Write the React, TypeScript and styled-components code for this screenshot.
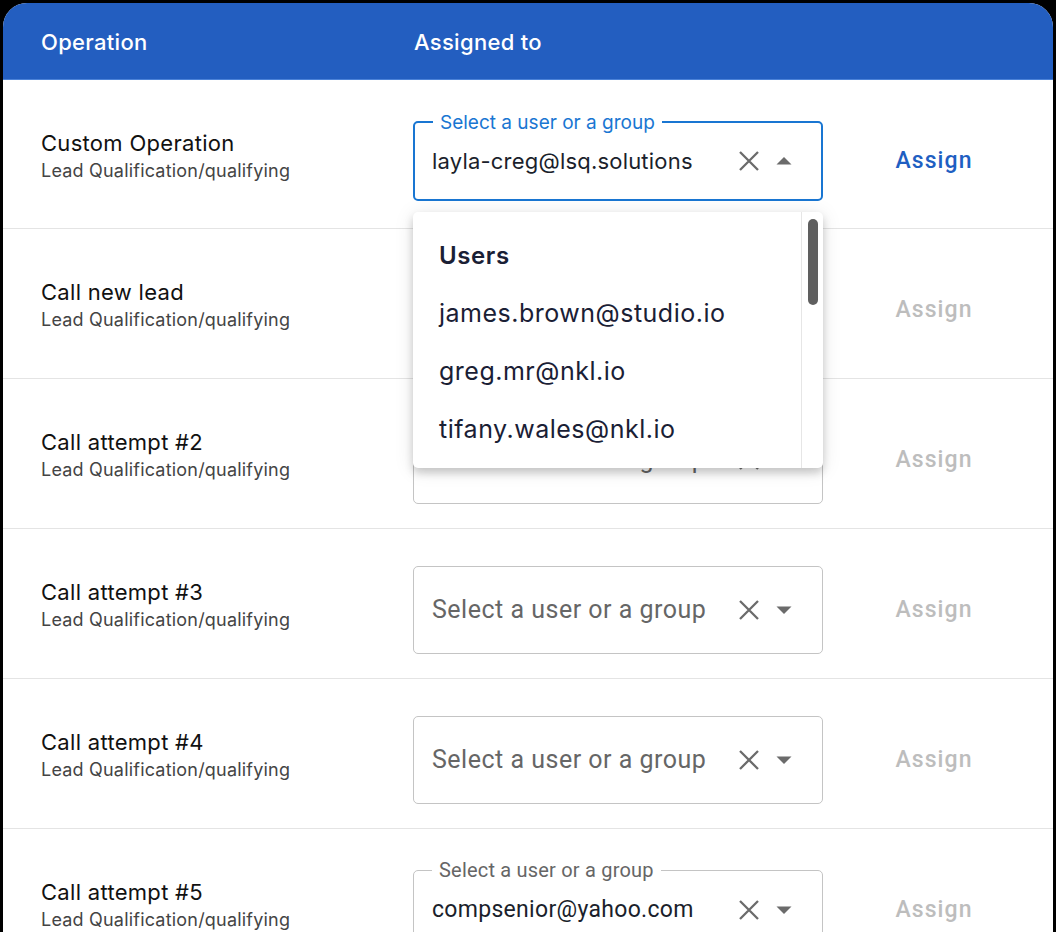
import React from "react";
import styled, { createGlobalStyle } from "styled-components";

const Global = createGlobalStyle`
  html, body { margin: 0; padding: 0; background: #000; }
  body { width: 1056px; height: 932px; overflow: hidden; }
`;

const Card = styled.div`
  margin: 3px 3px 0;
  height: 929px;
  background: #fff;
  border-radius: 24px 24px 0 0;
  overflow: hidden;
  font-family: Inter, "Noto Sans", sans-serif;
`;

const Header = styled.div`
  display: grid;
  grid-template-columns: 373px 1fr;
  align-items: center;
  height: 77px;
  padding: 2px 0 0 38px;
  box-sizing: border-box;
  background: #235ec0;
  border-bottom: 1px solid #4b82d8;
  color: #fff;
  font-size: 22px;
  letter-spacing: 0.3px;
  font-weight: 500;
`;

const Row = styled.div`
  display: grid;
  grid-template-columns: 372px 410px 1fr;
  align-items: center;
  height: 149px;
  padding: 12px 0 0 38px;
  box-sizing: border-box;
  border-bottom: 1px solid #e4e4e4;
  & + & { height: 150px; }
`;

const OpInfo = styled.div`
  display: flex;
  flex-direction: column;
  margin-top: -8px;
`;

const OpTitle = styled.div`
  font-size: 22px;
  letter-spacing: 0.3px;
  line-height: 27px;
  color: #111;
`;

const OpSub = styled.div`
  margin-top: 2px;
  font-size: 18px;
  letter-spacing: 0.2px;
  line-height: 24px;
  color: #444;
`;

const Field = styled.div<{ $focused?: boolean; $labelled?: boolean }>`
  position: relative;
  box-sizing: border-box;
  height: ${(p) => (p.$focused || p.$labelled ? 80 : 88)}px;
  margin-top: ${(p) => (p.$focused ? 2 : 0)}px;
  border: ${(p) => (p.$focused ? "2px solid #1976d2" : "1px solid #c4c4c4")};
  border-radius: 5px;
  display: flex;
  align-items: center;
  padding: ${(p) => (p.$focused ? "0 25px 0 17px" : "0 26px 0 18px")};
`;

const FloatLabel = styled.span<{ $focused?: boolean }>`
  position: absolute;
  top: ${(p) => (p.$focused ? -12 : -13)}px;
  left: 18px;
  padding: 0 7px;
  background: #fff;
  font-family: ${(p) => (p.$focused ? "Inter, sans-serif" : "Roboto, sans-serif")};
  font-size: ${(p) => (p.$focused ? 19 : 20)}px;
  letter-spacing: ${(p) => (p.$focused ? 0 : 0.2)}px;
  line-height: 24px;
  color: ${(p) => (p.$focused ? "#1976d2" : "#666")};
`;

const Value = styled.span<{ $placeholder?: boolean; $roboto?: boolean }>`
  flex: 1;
  font-family: ${(p) => (p.$roboto || p.$placeholder ? "Roboto, sans-serif" : "Inter, sans-serif")};
  font-size: ${(p) => (p.$placeholder ? 25 : p.$roboto ? 23 : 22)}px;
  letter-spacing: ${(p) => (p.$placeholder ? 0.5 : p.$roboto ? 0.3 : 0.2)}px;
  color: ${(p) => (p.$placeholder ? "#666" : "#1b1f2c")};
  white-space: nowrap;
  overflow: hidden;
`;

const Adornments = styled.div`
  display: flex;
  align-items: center;
  gap: 10px;
  color: #6b6b6b;
`;

const IconBtn = styled.span`
  display: inline-flex;
  width: 26px;
  height: 26px;
  align-items: center;
  justify-content: center;
  &:last-child { width: 24px; }
`;

const AssignBtn = styled.button<{ $active?: boolean }>`
  justify-self: center;
  margin-right: 8px;
  border: none;
  background: none;
  font-family: Roboto, sans-serif;
  font-weight: 500;
  font-size: 23px;
  letter-spacing: 1.1px;
  color: ${(p) => (p.$active ? "#1f5fc2" : "#bdbdbd")};
  padding: 0;
`;

const Menu = styled.div`
  position: absolute;
  z-index: 10;
  top: calc(100% + 13px);
  left: -2px;
  right: -2px;
  height: 256px;
  background: #fff;
  border-radius: 5px;
  box-shadow: 0 5px 8px rgba(0, 0, 0, 0.18), 0 2px 20px rgba(0, 0, 0, 0.1);
  display: flex;
  overflow: hidden;
`;

const MenuList = styled.ul`
  flex: 1;
  margin: 0;
  padding: 14px 0 0 26px;
  list-style: none;
`;

const MenuItem = styled.li<{ $heading?: boolean }>`
  height: 58px;
  display: flex;
  align-items: center;
  font-family: Inter, sans-serif;
  font-size: ${(p) => (p.$heading ? 24 : 25)}px;
  letter-spacing: ${(p) => (p.$heading ? 0.6 : 0.5)}px;
  font-weight: ${(p) => (p.$heading ? 600 : 400)};
  color: #1a2035;
`;

const Track = styled.div`
  width: 21px;
  border-left: 1px solid #e6e6e6;
  display: flex;
  justify-content: center;
  padding-top: 7px;
`;

const Thumb = styled.div`
  width: 10px;
  height: 86px;
  border-radius: 5px;
  background: #5f5f5f;
`;

const ClearIcon = () => (
  <svg width="22" height="22" viewBox="0 0 22 22">
    <path d="M2 2 20 20M20 2 2 20" stroke="currentColor" strokeWidth="2.3" fill="none" />
  </svg>
);

const Arrow = ({ up }: { up?: boolean }) => (
  <svg width="24" height="24" viewBox="0 0 24 24">
    <path d={up ? "M4.5 15.5h15L12 8z" : "M4.5 8.5h15L12 16z"} fill="currentColor" />
  </svg>
);

type RowData = {
  title: string;
  value?: string;
  focused?: boolean;
  open?: boolean;
};

const rows: RowData[] = [
  { title: "Custom Operation", value: "layla-creg@lsq.solutions", focused: true, open: true },
  { title: "Call new lead" },
  { title: "Call attempt #2" },
  { title: "Call attempt #3" },
  { title: "Call attempt #4" },
  { title: "Call attempt #5", value: "compsenior@yahoo.com" },
];

const users = [
  "james.brown@studio.io",
  "greg.mr@nkl.io",
  "tifany.wales@nkl.io",
  "anna.k@nkl.io",
];

export default function App() {
  return (
    <>
      <Global />
      <Card>
        <Header>
          <span>Operation</span>
          <span>Assigned to</span>
        </Header>
        {rows.map((r) => (
          <Row key={r.title}>
            <OpInfo>
              <OpTitle>{r.title}</OpTitle>
              <OpSub>Lead Qualification/qualifying</OpSub>
            </OpInfo>
            <Field $focused={r.focused} $labelled={!!r.value}>
              {r.value && <FloatLabel $focused={r.focused}>Select a user or a group</FloatLabel>}
              <Value $placeholder={!r.value} $roboto={!r.focused}>
                {r.value ?? "Select a user or a group"}
              </Value>
              <Adornments>
                <IconBtn>
                  <ClearIcon />
                </IconBtn>
                <IconBtn>
                  <Arrow up={r.open} />
                </IconBtn>
              </Adornments>
              {r.open && (
                <Menu>
                  <MenuList>
                    <MenuItem $heading>Users</MenuItem>
                    {users.map((u) => (
                      <MenuItem key={u}>{u}</MenuItem>
                    ))}
                  </MenuList>
                  <Track>
                    <Thumb />
                  </Track>
                </Menu>
              )}
            </Field>
            <AssignBtn $active={r.focused}>Assign</AssignBtn>
          </Row>
        ))}
      </Card>
    </>
  );
}
